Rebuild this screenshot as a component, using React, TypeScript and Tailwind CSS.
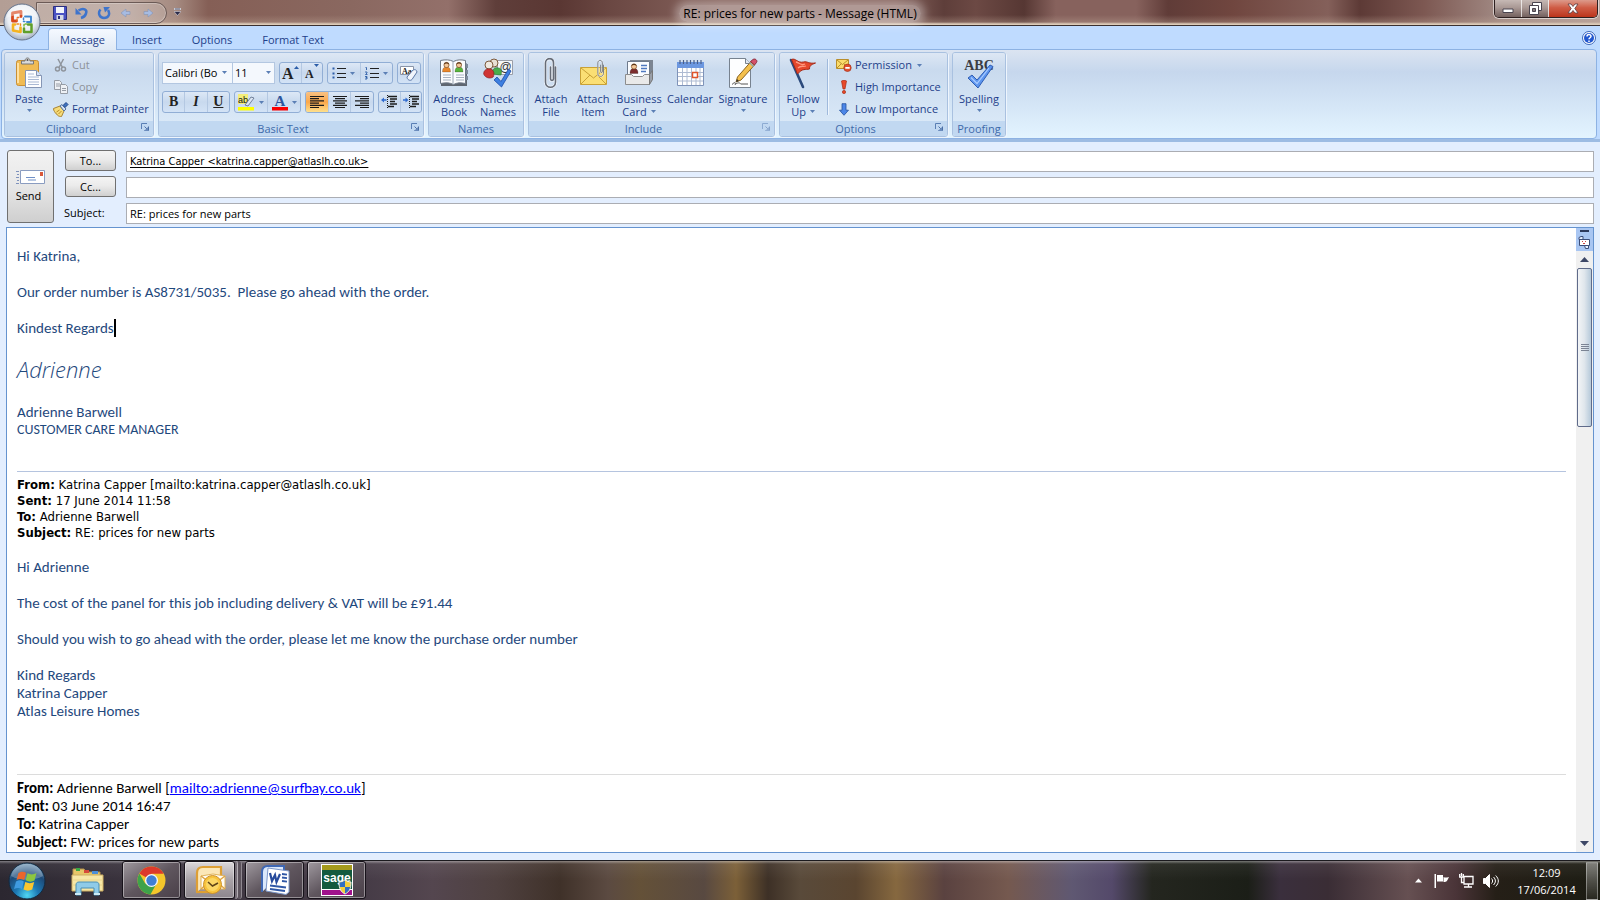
import type { ReactNode } from "react";

/* ---------- small shared pieces ---------- */

function Caret({ className = "" }: { className?: string }) {
  return (
    <svg width="5" height="3" viewBox="0 0 5 3" className={className} aria-hidden="true">
      <path d="M0 0h5L2.5 3z" fill="#5b7fb5" />
    </svg>
  );
}

function Group({ label, width, launcher, faded, children }: { label: string; width: string; launcher?: boolean; faded?: boolean; children: ReactNode }) {
  return (
    <section
      aria-label={label}
      className={`${width} flex shrink-0 flex-col overflow-hidden rounded-[3px] border border-[#a9c1e0] shadow-[1px_1px_0_#eef5fd]`}
    >
      <div className="flex h-17 bg-gradient-to-b from-[#dde7f4] via-[#c9daee] via-25% to-[#d9e8f7]">{children}</div>
      <div className={`relative flex h-[15px] items-center justify-center bg-[#c1d8f1] text-[11px] leading-[15px] text-[#3e6aaa] ${launcher ? "pr-4" : ""}`}>
        {label}
        {launcher && (
          <button aria-label={`${label} options`} className={`absolute top-0.5 right-1 ${faded ? "opacity-50" : ""}`}>
            <svg width="8" height="9" viewBox="0 0 8 9">
              <path d="M.5 6V.5H6" fill="none" stroke="#5a7fb4" />
              <path d="M3.500 3.500l3 3M7.500 3.500v4h-4" fill="none" stroke="#4a6fa6" />
              <path d="M7 4v4H3z" fill="#6b8cbd" />
            </svg>
          </button>
        )}
      </div>
    </section>
  );
}

function BigButton({ lines, width, caret, children }: { lines: string[]; width: string; caret?: boolean; children: ReactNode }) {
  return (
    <button className={`${width} flex shrink-0 flex-col items-center pt-1 text-[11px] leading-[13px] text-[#1e3f8a]`}>
      <span className="mb-[3px] flex h-8 items-center justify-center">{children}</span>
      {lines.map((l, i) => (
        <span key={l} className="flex items-center gap-1 whitespace-nowrap">
          {l}
          {caret && i > 0 && <Caret />}
        </span>
      ))}
      {caret && lines.length === 1 && <Caret className="mt-1" />}
    </button>
  );
}

function RowButton({ label, disabled, caret, children }: { label: string; disabled?: boolean; caret?: boolean; children: ReactNode }) {
  return (
    <button className={`flex h-[22px] items-center gap-[3px] text-[11px] whitespace-nowrap ${disabled ? "text-[#8d9299]" : "text-[#1e3f8a]"}`}>
      <span className="flex w-4 justify-center">{children}</span>
      {label}
      {caret && <Caret className="ml-0.5" />}
    </button>
  );
}

function ToolSet({ children, width }: { children: ReactNode; width: string }) {
  return (
    <div className={`${width} flex h-[22px] shrink-0 divide-x divide-[#b4c8e2] overflow-hidden rounded-[3px] border border-[#91aed5] bg-gradient-to-b from-[#dde8f6] via-[#c8d9ee] to-[#d3e3f6]`}>
      {children}
    </div>
  );
}

function Tool({ label, active, children }: { label: string; active?: boolean; children: ReactNode }) {
  return (
    <button aria-label={label} className={`flex flex-1 items-center justify-center gap-1 ${active ? "bg-gradient-to-b from-[#f9c182] via-[#fba84a] to-[#fde08c]" : ""}`}>
      {children}
    </button>
  );
}

/* ---------- ribbon drawings ---------- */

const PasteIcon = () => (
  <svg width="28" height="32" viewBox="0 0 28 32">
    <rect x="1.500" y="3.500" width="22" height="25" rx="2" fill="#f0bb53" stroke="#c98f34" />
    <path d="M3 6v20" stroke="#ffe0a0" strokeWidth="2" />
    <path d="M6.500 7V4h3.500c0-4 5-4 5 0h3.500v3z" fill="#d9d9d9" stroke="#777" />
    <circle cx="12.500" cy="3" r="1" fill="#555" />
    <path d="M10.500 13.500h11l5 5v12h-16z" fill="#fdfeff" stroke="#8596b5" />
    <path d="M21.500 13.500v5h5" fill="#d7e3f5" stroke="#8596b5" />
    <path d="M13 17h6M13 20h11M13 22.500h11M13 25h11M13 27.500h11" stroke="#a9b9d4" />
  </svg>
);
const CutIcon = () => (
  <svg width="14" height="14" viewBox="0 0 14 14" fill="none" stroke="#8f959d" strokeWidth="1.500">
    <path d="M4 1l4.500 8.500M9.500 1L5 9.500" />
    <circle cx="3.500" cy="11" r="2" />
    <circle cx="9.500" cy="11" r="2" />
  </svg>
);
const CopyIcon = () => (
  <svg width="16" height="14" viewBox="0 0 16 14" fill="#eef1f5" stroke="#969ca5">
    <path d="M1.500.5h5l2 2v7h-7z" />
    <path d="M7.500 4.500h5l2 2v7h-7z" />
    <path d="M3 4h4M3 6h4M9 8.500h4M9 10.500h4" />
  </svg>
);
const PainterIcon = () => (
  <svg width="16" height="15" viewBox="0 0 16 15">
    <path d="M.5 6.500L7 4l4 5-2.500 5.500C5 14.500 4 13 4 12c-1 0-2-1-2-2C2 10 .5 9 .5 6.500z" fill="#f6dc7a" stroke="#a88332" />
    <path d="M3.500 10l3-2M5.500 12l3-3" stroke="#b88a25" />
    <path d="M7 4l2-1.500 4 4.500-2 2z" fill="#d6e2f3" stroke="#52729e" />
    <path d="M10 3.500L13 .5l2 2-3 3z" fill="#3f73c0" stroke="#1f4488" />
  </svg>
);
const LinesIcon = ({ rows }: { rows: [number, number][] }) => (
  <svg width="16" height="14" viewBox="0 0 16 14" stroke="#1c1c1c" strokeWidth="1.200">
    {rows.map(([a, b], i) => (
      <path key={i} d={`M${a} ${1.500 + i * 2.200}H${b}`} />
    ))}
  </svg>
);
const BulletIcon = ({ numbered }: { numbered?: boolean }) => (
  <svg width="14" height="14" viewBox="0 0 14 14">
    <path d="M5 2.500h9M5 7.500h9M5 11.500h9" stroke="#222" strokeWidth="1.200" />
    {numbered ? (
      <path d="M.5 1.500h1v2.500M0 6h2v1L.5 8.500H2.500M0 10.500h2v1.200H.8h1.200V13H0" fill="none" stroke="#2c5da8" strokeWidth=".9" />
    ) : (
      <path d="M.5 1.500h2v2h-2zM.5 6.500h2v2h-2zM.5 10.500h2v2h-2z" fill="#2c5da8" />
    )}
  </svg>
);
const IndentIcon = ({ out }: { out?: boolean }) => (
  <svg width="16" height="14" viewBox="0 0 16 14">
    <path d="M7 1.500h9M9 4h7M9 6.500h5M9 9h7M7 11.500h6" stroke="#1c1c1c" strokeWidth="1.400" />
    <path d="M6.500 0v13" stroke="#1c1c1c" strokeDasharray="1 1" />
    <path d={out ? "M0 5l3-2.500v1.700h2.500v1.600H3v1.700z" : "M5.500 5l-3-2.500v1.700H0v1.600h2.500v1.700z"} fill="#2f6bd0" />
  </svg>
);
const Person = ({ x, y, c }: { x: number; y: number; c: string }) => (
  <g transform={`translate(${x} ${y})`}>
    <path d="M0 10c0-4 1.500-5 4-5s4 1 4 5z" fill={c} stroke="#00000055" strokeWidth=".6" />
    <circle cx="4" cy="3" r="2.600" fill="#f3c79a" stroke="#7a4a20" strokeWidth=".7" />
    <path d="M1.400 2.600C1.500-.5 6.500-.5 6.600 2.600 5 1.200 3 1.200 1.400 2.600z" fill="#5a3417" />
  </g>
);
const AddressBookIcon = () => (
  <svg width="30" height="30" viewBox="0 0 30 30">
    <path d="M2 4h24l2 2v22H2z" fill="#5f6670" />
    <path d="M27 6h2v4h-2zM27 12h2v4h-2zM27 18h2v4h-2z" fill="#7d8b9c" />
    <path d="M1.500 2.500c5-1 9-1 13 1 4-2 7-2 12-1v23c-5-1-8-1-12 1-4-2-8-2-13-1z" fill="#fbfcfe" stroke="#6e7886" />
    <path d="M14 3.500v23" stroke="#9aa6b5" />
    <Person x={3.500} y={4} c="#e9872c" />
    <Person x={16} y={4} c="#58b43c" />
    <path d="M4 17h8M4 19.500h8M4 22h8M17 17h8M17 19.500h8M17 22h8" stroke="#a6b0bf" strokeWidth="1.100" />
  </svg>
);
const CheckNamesIcon = () => (
  <svg width="30" height="31" viewBox="0 0 30 31">
    <path d="M14.500 2.500h15v14h-15z" fill="#f6f7f9" stroke="#9b9fa8" />
    <text x="16.500" y="13" className="fill-[#333] font-['Liberation_Sans'] text-[12px]">@</text>
    <circle cx="11" cy="5" r="4" fill="#e8e1d5" stroke="#7d5a3c" />
    <path d="M9 16c0-5 3-7 6-6 3 0 4 3 3 7z" fill="#49ad4b" stroke="#2b7a33" strokeWidth=".7" />
    <circle cx="6" cy="7" r="4" fill="#efe9df" stroke="#7d5a3c" />
    <path d="M.7 16c0-4 3-5.500 6-5 4 .3 5 4 3.500 8-3 2-8 1-9.500-3z" fill="#cf3434" stroke="#8c1f1f" strokeWidth=".7" />
    <path d="M11 22l3-3 4 4.500L25.500 11l2.500 2-9.500 16z" fill="#3d7fe0" stroke="#1d4ea8" strokeWidth=".8" />
  </svg>
);
const Clip = ({ x = 0, y = 0, s = 1 }) => (
  <g transform={`translate(${x} ${y}) scale(${s})`} fill="none" strokeLinecap="round">
    <path d="M6.500 9v12c0 1.800 3 1.800 3 0V5C9.500-.8 1.500-.8 1.500 5v19c0 7 10 7 10 0V9" stroke="#ffffffaa" strokeWidth="3" />
    <path d="M6.500 9v12c0 1.800 3 1.800 3 0V5C9.500-.8 1.500-.8 1.500 5v19c0 7 10 7 10 0V9" stroke="#666c77" strokeWidth="1.600" />
  </g>
);
const AttachItemIcon = () => (
  <svg width="29" height="30" viewBox="0 0 29 30">
    <path d="M1.500 9.500h26v17h-26z" fill="#fbdf74" stroke="#c9a136" />
    <path d="M2 10l12.500 10L27 10M2 26l9-9M27 26l-9-9" fill="none" stroke="#c9a136" />
    <Clip x={18} y={2} s={0.560} />
  </svg>
);
const BusinessCardIcon = () => (
  <svg width="30" height="30" viewBox="0 0 30 30">
    <path d="M6 2h23v19l-5 6H6z" fill="#7c8592" />
    <path d="M3.500 3.500h22v16h-22z" fill="#fafcff" stroke="#6e7a8c" />
    <Person x={6} y={5.500} c="#7b2c2c" />
    <path d="M17 7.500h6M17 10.500h6M17 13.500h5" stroke="#4f79c0" strokeWidth="1.300" />
    <path d="M1.500 16.500h6l2 2h9l2-2h5v10h-24z" fill="#e9e9e9" stroke="#8c8c8c" />
    <path d="M25.500 16.500l3-4v9l-3 5z" fill="#9a9fa8" stroke="#777" />
  </svg>
);
const CalendarIcon = () => (
  <svg width="29" height="28" viewBox="0 0 29 28">
    <path d="M1.500 3.500h26v23h-26z" fill="#fff" stroke="#7f93b8" />
    <path d="M1 3h27v6H1z" fill="#6c97e0" />
    <path d="M4 5V1M7.500 5V1M11 5V1M14.500 5V1M18 5V1M21.500 5V1M25 5V1" stroke="#4a5f8a" strokeWidth="1.200" />
    <path d="M2 13.500h25M2 17.500h25M2 22h25M6.500 9v17M11 9v17M15.500 9v17M20 9v17M24 9v17" stroke="#aebbd2" />
    <path d="M16.500 13.500h5v5h-5z" fill="#fff" stroke="#e0542b" strokeWidth="1.500" />
  </svg>
);
const SignatureIcon = () => (
  <svg width="30" height="32" viewBox="0 0 30 32">
    <path d="M1.500 1.500h16l5 5v24h-21z" fill="#fdfeff" stroke="#77828f" />
    <path d="M17.500 1.500v5h5" fill="#dfe7f2" stroke="#77828f" />
    <path d="M4 27.500c3-3 4-2 3 0 4-3 5-1 6-.5h7" fill="none" stroke="#555" />
    <path d="M9.500 20L23 4.500l3.500 3.500L13 23l-5 2z" fill="#f4c04d" stroke="#8a6420" />
    <path d="M22.500 4.500l2.500-2c2-1.500 5 1 3.500 3l-2 2.500z" fill="#d6506a" stroke="#8a3040" />
    <path d="M21.500 5.500l4 4" stroke="#8fa3b8" strokeWidth="1.500" />
    <path d="M8 25l1-3 2 2z" fill="#333" />
  </svg>
);
const FlagIcon = () => (
  <svg width="28" height="32" viewBox="0 0 28 32">
    <path d="M2 3l12 27" stroke="#2c4a7c" strokeWidth="2.600" strokeLinecap="round" />
    <path d="M2.500 2.500c4-2 6 4 12 2.500 4-1 5 2 12 1-5 2-6 3-6 6-4 1-7-1-12 5z" fill="#e5482c" stroke="#a52a18" />
    <path d="M7 5c4 1 5 4 9 2M9 11c3-3 5-1 8-2" fill="none" stroke="#ff9a80" strokeWidth="1.300" />
  </svg>
);
const PermissionIcon = () => (
  <svg width="16" height="14" viewBox="0 0 16 14">
    <path d="M.5 1.500h12v9H.5z" fill="#fbdc6b" stroke="#b98e2c" />
    <path d="M1 2l5.500 4.500L12 2M1 10l4-4M12 10L8 6" fill="none" stroke="#b98e2c" />
    <circle cx="11.500" cy="9.800" r="3.700" fill="#e2502e" stroke="#a8321a" strokeWidth=".7" />
    <path d="M9.300 9.800h4.400" stroke="#fff" strokeWidth="1.700" />
  </svg>
);
const HighIcon = () => (
  <svg width="8" height="14" viewBox="0 0 8 14">
    <path d="M1.500 1c1-1 4-1 5 0L5 9H3z" fill="#e8492a" stroke="#a82c14" strokeWidth=".7" />
    <circle cx="4" cy="12" r="1.600" fill="#e8492a" stroke="#a82c14" strokeWidth=".7" />
  </svg>
);
const LowIcon = () => (
  <svg width="10" height="13" viewBox="0 0 10 13">
    <path d="M3 .7h4v6.500h2.500L5 12.300.5 7.200H3z" fill="#4c86e8" stroke="#24509f" strokeWidth=".8" />
  </svg>
);
const SpellingIcon = () => (
  <svg width="32" height="32" viewBox="0 0 32 32">
    <text x="16" y="13" textAnchor="middle" className="fill-[#3a3d44] font-['Liberation_Serif'] text-[14px] font-bold">ABC</text>
    <path d="M5 21l4-3 5 5L27 8l3 1.500L15 31z" fill="#5d95ee" stroke="#2453ad" strokeWidth=".9" />
    <path d="M8 20.500l6 6L26 11" fill="none" stroke="#a9cbff" strokeWidth="1.200" />
  </svg>
);

/* ---------- title bar ---------- */

const OfficeOrb = () => (
  <svg width="38" height="38" viewBox="0 0 38 38">
    <defs>
      <radialGradient id="orb" cx=".5" cy=".4" r=".6">
        <stop offset="0" stopColor="#fff" />
        <stop offset=".65" stopColor="#e9edf3" />
        <stop offset="1" stopColor="#a3afc0" />
      </radialGradient>
    </defs>
    <circle cx="19" cy="19" r="18" fill="url(#orb)" stroke="#66738a" />
    <g fill="none" strokeLinejoin="round" strokeLinecap="round">
      <path d="M13.500 18H9.500V10l8.500-1.500v5" stroke="#d8481d" strokeWidth="2.800" />
      <path d="M14 17.500v-3h3.500" stroke="#e9722c" strokeWidth="1.500" strokeDasharray="1.500 1.800" />
      <path d="M22 13.500h6v5.500h-4" stroke="#3f86cf" strokeWidth="1.900" />
      <path d="M20.500 15v3.500h2" stroke="#3f86cf" strokeWidth="1.500" strokeDasharray="1.500 1.800" />
      <path d="M12 21.500H10v6l7.500 1.500v-4.500" stroke="#f4b31f" strokeWidth="2.600" />
      <path d="M14 21h3.500v2" stroke="#f08a1c" strokeWidth="1.500" strokeDasharray="1.500 1.800" />
      <path d="M25 21.500h3.500v7.500H21v-3.500" stroke="#5f9f2a" strokeWidth="2.500" />
      <path d="M21 23v-2h2.500" stroke="#7ab83c" strokeWidth="1.500" strokeDasharray="1.500 1.800" />
    </g>
    <path d="M3 15C5 5 13 2 19 2s14 3 16 13c-9-4-23-4-32 0z" fill="#fff" opacity=".35" />
  </svg>
);

function TitleBar() {
  return (
    <header className="relative flex h-[26px] shrink-0 items-start border-b border-[#3a3030] bg-[linear-gradient(to_bottom,transparent_60%,rgba(190,165,150,0.35)_88%,#dccbb8_96%),linear-gradient(to_right,#b39e95_0,#b9a49c_8%,#a58a80_11%,#855f56_13%,#8a6860_22%,#93706a_28%,#5f3e3a_31%,#5a3733_35%,#6a4742_38%,#86635d_45%,#86635d_56%,#5e3e3a_59%,#6c4944_61%,#563733_64%,#87625d_66%,#87625d_71%,#603c38_73%,#70463f_77%,#84605a_83%,#5d3a36_85%,#7d5852_89%,#a38c86_94%,#b7a29b_100%)]">
      <div className="mt-0.5 ml-9 flex h-[22px] w-[131px] items-center gap-2 rounded-r-full border border-[#6b5a56] bg-white/15 pl-4 shadow-[inset_0_0_0_1px_rgba(255,255,255,0.25)]">
        <button aria-label="Save">
          <svg width="14" height="14" viewBox="0 0 14 14">
            <path d="M.5.5h13v13H.5z" fill="#4a52c4" stroke="#2b2f80" />
            <path d="M3 1h8v6H3z" fill="#f2f5fc" />
            <path d="M3.500 9h7v5h-7z" fill="#d5d9e6" />
            <path d="M5 10h2v3H5z" fill="#2b2f80" />
          </svg>
        </button>
        <button aria-label="Undo">
          <svg width="14" height="14" viewBox="0 0 14 14">
            <path d="M3.500 4.500c5-3 9-1 7.500 3-.8 2.500-3 4-5 4.500" fill="none" stroke="#3e74cc" strokeWidth="2.500" />
            <path d="M.5 2v6.500h6z" fill="#3e74cc" />
          </svg>
        </button>
        <button aria-label="Redo">
          <svg width="14" height="14" viewBox="0 0 14 14">
            <path d="M3.500 3.500C.5 7 2.500 12 7 12s6.500-4 4-8" fill="none" stroke="#3e74cc" strokeWidth="2.500" />
            <path d="M6.500 1h6.500L8 6.500z" fill="#3e74cc" />
          </svg>
        </button>
        <button aria-label="Previous item">
          <svg width="14" height="10" viewBox="0 0 14 10"><path d="M2 5l5-4v2.500h4v3H7V9z" fill="#a6bbe2" stroke="#8794b4" strokeWidth=".6" /></svg>
        </button>
        <button aria-label="Next item">
          <svg width="14" height="10" viewBox="0 0 14 10"><path d="M12 5L7 1v2.500H3v3h4V9z" fill="#a6bbe2" stroke="#8794b4" strokeWidth=".6" /></svg>
        </button>
      </div>
      <button aria-label="Customize quick access toolbar" className="mt-2 ml-[7px]">
        <svg width="7" height="8" viewBox="0 0 7 8">
          <path d="M0 1h7" stroke="#fff" strokeWidth="2" />
          <path d="M.5 1h6" stroke="#2a2a48" />
          <path d="M0 3.500h7L3.500 7.500z" fill="#2a2a48" stroke="#e8e8f0" strokeWidth=".5" />
        </svg>
      </button>
      <h1 className="pointer-events-none absolute inset-x-0 top-1 text-center text-[12px] leading-5 text-black">
        <span className="rounded-full bg-white/35 px-1 shadow-[0_0_8px_4px_rgba(255,255,255,0.35)]">RE: prices for new parts - Message (HTML)</span>
      </h1>
      <div className="mr-0.5 ml-auto flex h-[18px] w-[104px] divide-x divide-white/70 overflow-hidden rounded-b-[5px] border border-t-0 border-[#2d2020] shadow-[0_0_0_1px_rgba(255,255,255,0.55)]">
        <button aria-label="Minimize" className="flex flex-1 items-center justify-center bg-gradient-to-b from-[#c6b9b5] via-[#a99894] via-45% to-[#74615f]">
          <svg width="12" height="6" viewBox="0 0 12 6" className="mt-1"><path d="M1 1h10v3.500H1z" fill="#fff" stroke="#4a4550" /></svg>
        </button>
        <button aria-label="Restore" className="flex flex-1 items-center justify-center bg-gradient-to-b from-[#c6b9b5] via-[#a99894] via-45% to-[#74615f]">
          <svg width="13" height="13" viewBox="0 0 13 13" fill="#fff" stroke="#4a4550">
            <path d="M3.500.5h9v8h-9z" />
            <path d="M.5 3.500h9v9h-9z" />
            <path d="M3.500 6.500h3v3h-3z" fill="#8a7c7c" />
          </svg>
        </button>
        <button aria-label="Close" className="flex w-12 items-center justify-center bg-gradient-to-b from-[#dc9a8b] via-[#cf5c45] via-45% to-[#bb3319]">
          <svg width="12" height="11" viewBox="0 0 12 11">
            <path d="M1 1h3l2 2.500L8 1h3L7.800 5.500 11 10H8L6 7.500 4 10H1l3.200-4.500z" fill="#fff" stroke="#5a3a40" strokeWidth=".8" />
          </svg>
        </button>
      </div>
      <button aria-label="Office menu" className="absolute top-[3px] left-[3px] z-10"><OfficeOrb /></button>
    </header>
  );
}

/* ---------- ribbon ---------- */

function Ribbon() {
  const tab = "h-[23px] px-[15px] pt-1 text-[11px] leading-[19px] text-[#1e3f8a]";
  return (
    <div className="shrink-0 border-b-[3px] border-[#9dbce3] bg-[#bfdbff]">
      <nav className="flex h-[23px] items-end pl-12" aria-label="Ribbon tabs">
        <button className="relative z-[1] -mb-px h-[22px] w-[69px] rounded-t-[4px] border border-b-0 border-[#8db2e3] bg-gradient-to-b from-[#f5f9ff] to-[#dfe9f5] text-[11px] leading-[20px] text-[#1e3f8a]">Message</button>
        <button className={tab}>Insert</button>
        <button className={tab}>Options</button>
        <button className={tab}>Format Text</button>
        <button aria-label="Help" className="mr-1 mb-1 ml-auto">
          <svg width="14" height="14" viewBox="0 0 14 14">
            <circle cx="7" cy="7" r="6.500" fill="#fff" stroke="#3c67b8" />
            <circle cx="7" cy="7" r="5" fill="#2257cf" />
            <path d="M5 5.500C5 3 9 3 9 5.300 9 6.800 7 6.700 7 8.300M7 9.500V11" fill="none" stroke="#fff" strokeWidth="1.500" />
          </svg>
        </button>
      </nav>
      <div className="mr-[3px] ml-px flex gap-1 rounded-[4px] border border-[#8db2e3] bg-gradient-to-b from-[#dbe4f1] via-[#c6d7ed] via-25% to-[#e3f4ff] pt-0.5 pr-1 pb-px pl-0.5">
        <Group label="Clipboard" width="w-[150px]" launcher>
          <BigButton lines={["Paste"]} width="w-12" caret><PasteIcon /></BigButton>
          <div className="flex flex-col pt-px">
            <RowButton label="Cut" disabled><CutIcon /></RowButton>
            <RowButton label="Copy" disabled><CopyIcon /></RowButton>
            <RowButton label="Format Painter"><PainterIcon /></RowButton>
          </div>
        </Group>

        <Group label="Basic Text" width="w-[266px]" launcher>
          <div className="flex flex-col gap-[7px] pt-[9px] pl-[3px]">
            <div className="flex h-[22px] gap-1">
              <div className="flex">
                <div className="relative">
                  <select aria-label="Font" className="block h-[22px] w-[71px] appearance-none border border-[#b3c7e1] bg-[#f4f8fd] pl-0.5 text-[11px] leading-[18px] text-black">
                    <option>Calibri (Bo</option>
                  </select>
                  <Caret className="pointer-events-none absolute top-[9px] right-1.5" />
                </div>
                <div className="relative -ml-px">
                  <select aria-label="Font size" className="block h-[22px] w-[43px] appearance-none border border-[#b3c7e1] bg-[#f4f8fd] pl-0.5 text-[11px] leading-[18px] text-black">
                    <option>11</option>
                  </select>
                  <Caret className="pointer-events-none absolute top-[9px] right-1" />
                </div>
              </div>
              <ToolSet width="w-[44px]">
                <Tool label="Grow font">
                  <span className="flex pt-0.5 font-['Liberation_Serif'] text-[16px] leading-4 font-bold text-[#222]">A
                    <svg width="5" height="3" viewBox="0 0 5 3"><path d="M0 3h5L2.500 0z" fill="#2c5da8" /></svg>
                  </span>
                </Tool>
                <Tool label="Shrink font">
                  <span className="flex pt-0.5 font-['Liberation_Serif'] text-[12px] leading-5 font-bold text-[#222]">A
                    <svg width="5" height="3" viewBox="0 0 5 3"><path d="M0 0h5L2.500 3z" fill="#2c5da8" /></svg>
                  </span>
                </Tool>
              </ToolSet>
              <ToolSet width="w-[66px]">
                <Tool label="Bullets"><BulletIcon /><Caret /></Tool>
                <Tool label="Numbering"><BulletIcon numbered /><Caret /></Tool>
              </ToolSet>
              <ToolSet width="w-6">
                <Tool label="Clear formatting">
                  <svg width="18" height="17" viewBox="0 0 18 17">
                    <path d="M.5 1.500h13v8H.5z" fill="#fff" stroke="#8a95a8" />
                    <text x="2" y="8.500" className="fill-[#222] font-['Liberation_Serif'] text-[8px] font-bold">Aa</text>
                    <path d="M7 12l6-7c1.500-1 4 0 4 2l-5 7.500c-2 2-5 0-5-2.500z" fill="#f1f5fc" stroke="#5c77a6" />
                  </svg>
                </Tool>
              </ToolSet>
            </div>
            <div className="flex gap-1">
              <ToolSet width="w-[68px]">
                <Tool label="Bold"><span className="font-['Liberation_Serif'] text-[14px] leading-5 font-bold text-[#222]">B</span></Tool>
                <Tool label="Italic"><span className="font-['Liberation_Serif'] text-[14px] leading-5 font-bold text-[#222] italic">I</span></Tool>
                <Tool label="Underline"><span className="font-['Liberation_Serif'] text-[14px] leading-5 font-bold text-[#222] underline">U</span></Tool>
              </ToolSet>
              <ToolSet width="w-[67px]">
                <Tool label="Highlight colour">
                  <svg width="17" height="18" viewBox="0 0 17 18">
                    <path d="M0 1h10v10H0z" fill="#f4ee7a" />
                    <text x="0" y="10" className="fill-[#111] font-['Liberation_Sans'] text-[9px]">ab</text>
                    <path d="M7 12l6-8 3 1-6 8z" fill="#dce6f4" stroke="#5c6c86" strokeWidth=".8" />
                    <path d="M0 14h16v3.500H0z" fill="#ffff00" />
                  </svg>
                  <Caret />
                </Tool>
                <Tool label="Font colour">
                  <svg width="16" height="18" viewBox="0 0 16 18">
                    <text x="8" y="12.500" textAnchor="middle" className="fill-[#2d559c] font-['Liberation_Serif'] text-[15px] font-bold">A</text>
                    <path d="M0 14h16v3.500H0z" fill="#fb0000" />
                  </svg>
                  <Caret />
                </Tool>
              </ToolSet>
              <ToolSet width="w-[69px]">
                <Tool label="Align left" active><LinesIcon rows={[[1, 15], [1, 10], [1, 15], [1, 10], [1, 15], [1, 10]]} /></Tool>
                <Tool label="Centre"><LinesIcon rows={[[1, 15], [3, 13], [1, 15], [3, 13], [1, 15], [3, 13]]} /></Tool>
                <Tool label="Align right"><LinesIcon rows={[[1, 15], [6, 15], [1, 15], [6, 15], [1, 15], [6, 15]]} /></Tool>
              </ToolSet>
              <ToolSet width="w-[44px]">
                <Tool label="Decrease indent"><IndentIcon out /></Tool>
                <Tool label="Increase indent"><IndentIcon /></Tool>
              </ToolSet>
            </div>
          </div>
        </Group>

        <Group label="Names" width="w-[96px]">
          <div className="flex pl-[3px]">
            <BigButton lines={["Address", "Book"]} width="w-11"><AddressBookIcon /></BigButton>
            <BigButton lines={["Check", "Names"]} width="w-11"><CheckNamesIcon /></BigButton>
          </div>
        </Group>

        <Group label="Include" width="w-[247px]" launcher faded>
          <div className="flex pl-px">
            <BigButton lines={["Attach", "File"]} width="w-[42px]">
              <svg width="14" height="31" viewBox="0 0 14 31"><Clip /></svg>
            </BigButton>
            <BigButton lines={["Attach", "Item"]} width="w-[42px]"><AttachItemIcon /></BigButton>
            <BigButton lines={["Business", "Card"]} width="w-[50px]" caret><BusinessCardIcon /></BigButton>
            <BigButton lines={["Calendar"]} width="w-[52px]"><CalendarIcon /></BigButton>
            <BigButton lines={["Signature"]} width="w-[54px]" caret><SignatureIcon /></BigButton>
          </div>
        </Group>

        <Group label="Options" width="w-[169px]" launcher>
          <BigButton lines={["Follow", "Up"]} width="w-[46px]" caret><FlagIcon /></BigButton>
          <div className="mt-1.5 mr-2 ml-px h-14 w-px bg-[#9fb9dc] shadow-[1px_0_0_#eef5fd]" />
          <div className="flex flex-col pt-px">
            <RowButton label="Permission" caret><PermissionIcon /></RowButton>
            <RowButton label="High Importance"><HighIcon /></RowButton>
            <RowButton label="Low Importance"><LowIcon /></RowButton>
          </div>
        </Group>

        <Group label="Proofing" width="w-[54px]">
          <BigButton lines={["Spelling"]} width="w-[52px]" caret><SpellingIcon /></BigButton>
        </Group>
      </div>
    </div>
  );
}

/* ---------- address fields ---------- */

function Addressing() {
  const pill = "h-[21px] rounded-[3px] border border-[#707070] bg-gradient-to-b from-[#f4f4f4] via-[#ebebeb] via-45% to-[#d0d0d0] text-[11px] leading-[18px] text-black";
  const field = "mt-px h-[21px] w-full min-w-0 border border-[#abadb3] bg-white px-[3px] text-[11px] text-black outline-none";
  return (
    <form className="flex shrink-0 gap-2.5 pt-2 pr-1.5 pb-[3px] pl-[7px]">
      <button type="button" className="flex h-[73px] w-[47px] shrink-0 flex-col items-center justify-center gap-[3px] rounded-[3px] border border-[#707070] bg-gradient-to-b from-[#f2f2f2] via-[#e9e9e9] via-45% to-[#cfcfcf] text-[11px] leading-4 text-black">
        <svg width="29" height="15" viewBox="0 0 29 15">
          <path d="M4.500.5h24v13h-24z" fill="#fff" stroke="#8a9cc0" />
          <path d="M24 2h3v4h-3z" fill="#d9583a" />
          <path d="M10 7.500h9M12 10h8" stroke="#6f8fc6" />
          <path d="M0 1.500h3M1 4.500h2M0 7.500h3M1 10.500h2M0 13.500h3" stroke="#7f93bd" />
        </svg>
        <span className="pr-1">Send</span>
      </button>
      <div className="grid flex-1 grid-cols-[52px_1fr] gap-x-2.5 gap-y-1">
        <button type="button" className={`ml-px ${pill}`}>To...</button>
        <input aria-label="To" className={`${field} font-['DejaVu_Sans_Condensed'] underline underline-offset-2`} defaultValue="Katrina Capper <katrina.capper@atlaslh.co.uk>" />
        <button type="button" className={`ml-px ${pill}`}>Cc...</button>
        <input aria-label="Cc" className={field} />
        <label htmlFor="subject" className="text-[11px] leading-[22px] text-black">Subject:</label>
        <input id="subject" className={field} defaultValue="RE: prices for new parts" />
      </div>
    </form>
  );
}

/* ---------- message ---------- */

function HeaderLine({ name, children }: { name: string; children: ReactNode }) {
  return (
    <p>
      <b>{name}:</b> {children}
    </p>
  );
}

function Message() {
  return (
    <main className="mx-1.5 mb-[7px] flex min-h-0 flex-1 border border-[#6593cf] bg-white">
      <article className="min-w-0 flex-1 overflow-hidden pt-[19px] pr-2.5 pl-2.5 font-['Carlito','Open_Sans',sans-serif] text-[15px] leading-[18px] text-[#1f497d]">
        <p>Hi Katrina,</p>
        <p className="mt-[18px] whitespace-pre">Our order number is AS8731/5035.  Please go ahead with the order.</p>
        <p className="mt-[18px] flex">
          Kindest Regards<span className="h-[18px] w-0.5 bg-black" />
        </p>
        <p className="mt-4 font-['Open_Sans'] text-[22px] leading-8 font-light italic">Adrienne</p>
        <p className="mt-[18px]">Adrienne Barwell</p>
        <p className="text-[14px] leading-[17px]">CUSTOMER CARE MANAGER</p>
        <hr className="mt-[33px] border-[#b5c4df]" />
        <div className="mt-[5px] font-['DejaVu_Sans_Condensed'] text-[13px] leading-4 text-black">
          <HeaderLine name="From">Katrina Capper [mailto:katrina.capper@atlaslh.co.uk]</HeaderLine>
          <HeaderLine name="Sent">17 June 2014 11:58</HeaderLine>
          <HeaderLine name="To">Adrienne Barwell</HeaderLine>
          <HeaderLine name="Subject">RE: prices for new parts</HeaderLine>
        </div>
        <p className="mt-[17px]">Hi Adrienne</p>
        <p className="mt-[18px]">The cost of the panel for this job including delivery &amp; VAT will be £91.44</p>
        <p className="mt-[18px]">Should you wish to go ahead with the order, please let me know the purchase order number</p>
        <div className="mt-[18px]">
          <p>Kind Regards</p>
          <p>Katrina Capper</p>
          <p>Atlas Leisure Homes</p>
        </div>
        <hr className="mt-[54px] border-[#dcdcdc]" />
        <div className="mt-1 text-black">
          <HeaderLine name="From">
            Adrienne Barwell [<a href="mailto:adrienne@surfbay.co.uk" className="text-[#0000ff] underline">mailto:adrienne@surfbay.co.uk</a>]
          </HeaderLine>
          <HeaderLine name="Sent">03 June 2014 16:47</HeaderLine>
          <HeaderLine name="To">Katrina Capper</HeaderLine>
          <HeaderLine name="Subject">FW: prices for new parts</HeaderLine>
        </div>
      </article>
      <div className="flex w-[17px] shrink-0 flex-col items-center bg-[#f0f0f0]">
        <div className="flex w-full flex-col items-center gap-1 bg-[#a9c6f2] pt-0.5 pb-0.5">
          <span className="h-0.5 w-[9px] bg-[#2c3a5c]" />
          <svg width="13" height="13" viewBox="0 0 13 13">
            <path d="M1.500 3.500h10v6h-10z" fill="#fff" stroke="#3b4d78" />
            <path d="M1 1.500l2-1h2v3H1zM6.500 9.500h4v3h-3z" fill="#e7effb" stroke="#3b4d78" />
            <path d="M4 5.500h1M7 5.500h1M5 7.500h2" stroke="#c44" />
          </svg>
        </div>
        <button aria-label="Scroll up" className="flex h-[17px] items-center">
          <svg width="9" height="5" viewBox="0 0 9 5"><path d="M0 5h9L4.500 0z" fill="#3d4766" /></svg>
        </button>
        <div className="flex h-[159px] w-[15px] items-center justify-center rounded-[2px] border border-[#5f6b8a] bg-gradient-to-r from-[#f3f5f7] via-[#dfe6ec] to-[#b5c9da]">
          <svg width="8" height="8" viewBox="0 0 8 8"><path d="M0 .5h8M0 2.500h8M0 4.500h8M0 6.500h8" stroke="#7b8494" /></svg>
        </div>
        <button aria-label="Scroll down" className="mt-auto flex h-[17px] items-center">
          <svg width="9" height="5" viewBox="0 0 9 5"><path d="M0 0h9L4.500 5z" fill="#3d4766" /></svg>
        </button>
      </div>
    </main>
  );
}

/* ---------- taskbar ---------- */

function TaskButton({ label, active, children }: { label: string; active?: boolean; children: ReactNode }) {
  return (
    <button
      aria-label={label}
      className={`flex h-[38px] items-center justify-center rounded-[3px] border border-[#17121a] shadow-[inset_0_0_0_1px_rgba(255,255,255,0.4)] ${active ? "w-[51px] bg-gradient-to-b from-[#dcd8da] via-[#a8a2a7] to-[#8d868d]" : "w-[59px] bg-gradient-to-br from-[#a09aa0] via-[#5f565e] to-[#4a4049]"}`}
    >
      {children}
    </button>
  );
}

function Taskbar() {
  return (
    <footer className="flex h-10 shrink-0 items-start border-t border-[#1b1a1e] bg-[linear-gradient(to_bottom,rgba(255,255,255,0.4)_0,rgba(255,255,255,0.06)_3px,transparent_50%),linear-gradient(to_right,#2b2730_0,#3d3540_10%,#463c47_23%,#54464f_27%,#4f4140_31%,#3f3129_35%,#5b4a41_38%,#645138_40%,#584941_44%,#7c6038_46%,#3d3026_48%,#594a3a_50%,#5a4530_53.5%,#86683f_56%,#5a4240_59%,#75594f_63%,#5f5872_67%,#54496a_69.5%,#24261f_72%,#1b1e17_78%,#3a2f3d_80%,#3a2d35_83%,#665052_88%,#4a3438_91%,#251f17_93.5%,#1c1c13_100%)]">
      <button aria-label="Start" className="ml-2">
        <svg width="38" height="39" viewBox="0 0 38 39">
          <defs>
            <radialGradient id="start" cx=".5" cy=".9" r=".9">
              <stop offset="0" stopColor="#4fd6f2" />
              <stop offset=".35" stopColor="#1d79b4" />
              <stop offset=".7" stopColor="#1d4a78" />
              <stop offset="1" stopColor="#7fa4c0" />
            </radialGradient>
          </defs>
          <circle cx="19" cy="20" r="18" fill="url(#start)" stroke="#12293f" />
          <path d="M3 15C6 5 13 3 19 3s13 2 16 12c-9 5-23 5-32 0z" fill="#fff" opacity=".25" />
          <path d="M10.500 12c3-2 5-1.500 7.500-.3l-1.800 7.300c-2.500-1.500-5-1.500-7.700 0z" fill="#e9662c" />
          <path d="M19.500 12.300c3 1.500 6 1.500 9-.3L26.500 19.500c-3 1.600-5.500 1.500-8.800-.2z" fill="#8cc63f" />
          <path d="M8 20.500c3-1.600 5.500-1.500 7.800 0L14 28c-2.800-1.500-5-1.300-8 0z" fill="#3f9be0" />
          <path d="M17.300 21c3 1.500 6 1.500 8.900 0l-2 7.500c-3 1.500-5.500 1.500-8.700 0z" fill="#fbc62f" />
        </svg>
      </button>
      <button aria-label="Windows Explorer" className="mt-1 ml-6">
        <svg width="36" height="32" viewBox="0 0 36 32">
          <path d="M3 4h11l2 3h14v6H3z" fill="#e8c768" stroke="#b3914a" />
          <path d="M6 3h4v3H6z" fill="#3aa845" />
          <path d="M14 5h5v3h-5z" fill="#d64a3a" />
          <path d="M22 6h6v3h-6z" fill="#4c8fd8" />
          <path d="M2 10h31v16H2z" fill="#f7e7a6" stroke="#cdae62" />
          <path d="M2 15h31M2 20h31" stroke="#ead48a" />
          <path d="M6 30V20c0-2 1-3 3-3h17c2 0 3 1 3 3v10h-5v-7H11v7z" fill="#8fcbe8" stroke="#4a8fb4" />
          <path d="M5 29h6M24 29h6" stroke="#cdeaf6" strokeWidth="2" />
        </svg>
      </button>
      <div className="ml-4 flex gap-[3px]">
        <TaskButton label="Chrome">
          <svg width="29" height="29" viewBox="0 0 28 28">
            <circle cx="14" cy="14" r="13.500" fill="#f4c62b" />
            <path d="M14 14L2.300 7.200A13.500 13.500 0 0 1 25.700 7.500H14z" fill="#dc3a2c" />
            <path d="M14 14l-6 3.200L2.300 7.200A13.500 13.500 0 0 0 13 27.500l5.500-10z" fill="#3ea24a" />
            <circle cx="14" cy="14" r="6.300" fill="#f3f6fa" />
            <circle cx="14" cy="14" r="5" fill="#3f7fd4" />
          </svg>
        </TaskButton>
        <div className="flex">
          <TaskButton label="Outlook" active>
            <svg width="32" height="31" viewBox="0 0 32 31">
              <path d="M3 27V8c0-4 2-6 6-6h18v20H9" fill="#fbe7b8" stroke="#dd9f35" strokeWidth="2.200" />
              <path d="M2 27h16" stroke="#dd9f35" strokeWidth="2.200" />
              <path d="M7 11l12-2 12 2v13H7z" fill="#fffdf6" stroke="#dfb35c" />
              <path d="M7 11l12 9 12-9M7 24l8-7M31 24l-8-7" fill="none" stroke="#dfa544" strokeWidth="1.400" />
              <circle cx="18.500" cy="19.500" r="9" fill="#f7c33c" stroke="#cf922a" />
              <circle cx="18.500" cy="19.500" r="6.500" fill="#fbd765" />
              <path d="M14 17l4.500 4L24 18" fill="none" stroke="#5f4519" strokeWidth="1.600" />
            </svg>
          </TaskButton>
          <span className="h-[38px] w-[3px] rounded-r-[3px] border-r border-[#b4aeb4] bg-[#756d76]" />
          <span className="h-[38px] w-1 rounded-r-[3px] border-r border-[#8f8890] bg-[#5c535c]" />
        </div>
        <TaskButton label="Word">
          <svg width="30" height="30" viewBox="0 0 30 30">
            <path d="M2 27V7c0-4 2-6 6-6h16v5" fill="#dbe8fa" stroke="#3f68b4" strokeWidth="2" />
            <path d="M8 3l21 3v21l-3 2.500L6 26z" fill="#fff" stroke="#7c97c9" />
            <path d="M10 8l2 8 3-6 1.500 7L20 9" fill="none" stroke="#274b9c" strokeWidth="2.200" />
            <path d="M22 9l5 .6M22 12.500l5 .6M22 16l5 .6M10 20.500l16 2M10 24l15 2" stroke="#2f57a6" strokeWidth="1.800" />
          </svg>
        </TaskButton>
        <TaskButton label="Sage">
          <svg width="32" height="32" viewBox="0 0 32 32">
            <path d="M0 0h32v32H0z" fill="#fff" />
            <path d="M1 1h30v5H1z" fill="#a59a1c" />
            <path d="M1 6h30v19H1z" fill="#145a3e" />
            <path d="M1 26h30v5H1z" fill="#a0128c" />
            <text x="16" y="18" textAnchor="middle" className="fill-white font-['Liberation_Sans'] text-[12px] font-bold">sage</text>
            <path d="M18 18c3 0 4-1 6-2 2 1 3 2 6 2 0 7-2 10-6 12-4-2-6-5-6-12z" fill="#f3cf3c" stroke="#e8eef6" />
            <path d="M18.500 18.500c2.500 0 3.500-1 5.500-2V23h-5zM24 23h5.200c-.7 3-2.200 5-5.200 6.500z" fill="#2f6fc4" />
          </svg>
        </TaskButton>
      </div>
      <div className="ml-auto flex h-full items-center gap-[9px] text-white">
        <button aria-label="Show hidden icons" className="mr-[3px]">
          <svg width="7" height="5" viewBox="0 0 7 5"><path d="M0 4.500h7L3.500.5z" fill="#fff" /></svg>
        </button>
        <button aria-label="Action Center">
          <svg width="16" height="16" viewBox="0 0 16 16" fill="#fff">
            <path d="M.5 1h1.500v14H.5zM3 2h6v6.500H3zM9.500 4c2 1 3 .5 5.500 0l-1.500 3c-1 2-2.500 2-4 2z" />
          </svg>
        </button>
        <button aria-label="Network">
          <svg width="15" height="15" viewBox="0 0 15 15" fill="none" stroke="#fff" strokeWidth="1.300">
            <path d="M5 3.500h9v7.500H5zM9.500 11v3M5 14h8" />
            <path d="M.7 1v3h3.600V1M2.500 0v3M2.500 4v5.500H5" />
          </svg>
        </button>
        <button aria-label="Volume">
          <svg width="16" height="14" viewBox="0 0 16 14" fill="none" stroke="#fff">
            <path d="M.5 4.500h2l4-4v13l-4-4h-2z" fill="#fff" />
            <path d="M8.500 4.500c1.500 1.500 1.500 3.500 0 5M10.500 3c2.500 2.500 2.500 5.500 0 8M12.700 1.500c3.500 3.500 3.500 7.500 0 11" />
          </svg>
        </button>
        <div className="ml-2 w-[61px] text-center text-[11px] leading-[17px]">
          <p>12:09</p>
          <p>17/06/2014</p>
        </div>
        <button aria-label="Show desktop" className="mr-0.5 h-[38px] w-3 border border-white/35 bg-gradient-to-b from-white/40 to-white/5" />
      </div>
    </footer>
  );
}

export default function App() {
  return (
    <div className="flex h-screen flex-col overflow-hidden bg-[#e3eefe] font-['Open_Sans','Noto_Sans',sans-serif]">
      <TitleBar />
      <Ribbon />
      <Addressing />
      <Message />
      <Taskbar />
    </div>
  );
}
